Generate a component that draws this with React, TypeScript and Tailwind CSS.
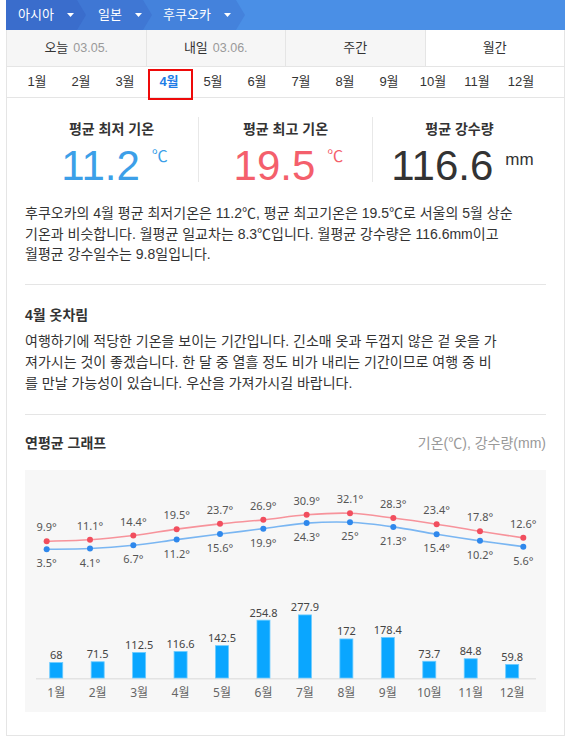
import React from 'react';

const crumbs = [
  { label: '아시아', cls: 'z-30 w-[80px] pl-[12px] bg-[#3a6dcc]' },
  { label: '일본', cls: 'z-20 w-[75px] pl-[21px] -ml-[9px] bg-[#3f77d4]' },
  { label: '후쿠오카', cls: 'z-10 w-[102px] pl-[20px] -ml-[9px] bg-[#4482dc]' },
];

const tabs = [
  { label: '오늘', date: '03.05.' },
  { label: '내일', date: '03.06.' },
  { label: '주간' },
  { label: '월간', active: true },
];

const months = ['1월', '2월', '3월', '4월', '5월', '6월', '7월', '8월', '9월', '10월', '11월', '12월'];

const maxTemps = [9.9, 11.1, 14.4, 19.5, 23.7, 26.9, 30.9, 32.1, 28.3, 23.4, 17.8, 12.6];
const minTemps = [3.5, 4.1, 6.7, 11.2, 15.6, 19.9, 24.3, 25, 21.3, 15.4, 10.2, 5.6];
const rain = [68, 71.5, 112.5, 116.6, 142.5, 254.8, 277.9, 172, 178.4, 73.7, 84.8, 59.8];

type Pt = [number, number];

// catmull-rom -> bezier, gives the soft curve of the reference
const smoothPath = (pts: Pt[]) => {
  let d = `M${pts[0][0]},${pts[0][1]}`;
  for (let i = 0; i < pts.length - 1; i++) {
    const p0 = pts[i - 1] || pts[i];
    const p1 = pts[i];
    const p2 = pts[i + 1];
    const p3 = pts[i + 2] || p2;
    const c1x = p1[0] + (p2[0] - p0[0]) / 6;
    const c1y = p1[1] + (p2[1] - p0[1]) / 6;
    const c2x = p2[0] - (p3[0] - p1[0]) / 6;
    const c2y = p2[1] - (p3[1] - p1[1]) / 6;
    d += ` C${c1x},${c1y} ${c2x},${c2y} ${p2[0]},${p2[1]}`;
  }
  return d;
};

const Caret = () => (
  <svg width="7" height="4" viewBox="0 0 7 4" className="shrink-0">
    <path d="M0 0h7L3.5 4z" fill="#fff" />
  </svg>
);

const YearChart: React.FC = () => {
  const tx = (i: number) => 21.67 + 43.33 * i;
  const ty = (t: number) => 83.7 - 1.259 * t;
  const maxPts: Pt[] = maxTemps.map((t, i) => [tx(i), ty(t)]);
  const minPts: Pt[] = minTemps.map((t, i) => [tx(i), ty(t)]);
  const bx = (i: number) => 10.5 + 41.45 * (i + 0.5);
  const base = 208;

  return (
    <svg width="520" height="242" viewBox="0 0 520 242" className="block">
      <path d={smoothPath(maxPts)} fill="none" stroke="#f7939b" strokeWidth="1.6" />
      <path d={smoothPath(minPts)} fill="none" stroke="#7ab6f2" strokeWidth="1.6" />
      {maxPts.map(([x, y], i) => (
        <g key={`mx${i}`}>
          <circle cx={x} cy={y} r="3" fill="#f14e5e" />
          <text
            x={x}
            y={y - 14.5}
            textAnchor="middle"
            dominantBaseline="central"
            fontSize="11"
            fill="#555"
            fontFamily="'Noto Sans', sans-serif"
          >
            {maxTemps[i]}°
          </text>
        </g>
      ))}
      {minPts.map(([x, y], i) => (
        <g key={`mn${i}`}>
          <circle cx={x} cy={y} r="3" fill="#2f88ec" />
          <text
            x={x}
            y={y + 13.5}
            textAnchor="middle"
            dominantBaseline="central"
            fontSize="11"
            fill="#555"
            fontFamily="'Noto Sans', sans-serif"
          >
            {minTemps[i]}°
          </text>
        </g>
      ))}
      <line x1="11" y1={base + 0.8} x2="511" y2={base + 0.8} stroke="#e3e3e3" strokeWidth="1.6" />
      {rain.map((v, i) => {
        const h = v * 0.227;
        const x = bx(i);
        return (
          <g key={`r${i}`}>
            <rect x={x - 6.5} y={base - h} width="13" height={h} fill="#0aa6ff" stroke="#6ccbff" strokeWidth="0.8" />
            <text
              x={x}
              y={base - h - 8}
              textAnchor="middle"
              dominantBaseline="central"
              fontSize="11"
              fill="#444"
              fontFamily="'Noto Sans', sans-serif"
            >
              {v}
            </text>
            <text
              x={x}
              y={222}
              textAnchor="middle"
              dominantBaseline="central"
              fontSize="12"
              fill="#666"
              fontFamily="'Noto Sans', 'Noto Sans CJK KR', sans-serif"
            >
              {months[i]}
            </text>
          </g>
        );
      })}
    </svg>
  );
};

const StatBox: React.FC<{ title: string; value: string; unit: string; color: string; first?: boolean; unitCls?: string }> = ({
  title,
  value,
  unit,
  color,
  first,
  unitCls,
}) => (
  <div className={`flex-1 flex flex-col items-center h-[65px] ${first ? '' : 'border-l border-[#e8e8e8]'}`}>
    <div className="mt-[2px] text-[14px] leading-[20px] font-bold text-[#333]">{title}</div>
    <div className="mt-[6px] flex items-start pl-[6px]">
      <span className={`text-[42px] leading-[42px] ${color}`}>{value}</span>
      <span className={`ml-[12px] ${unitCls ?? 'mt-[3px] text-[16px] leading-[18px]'} ${color}`}>{unit}</span>
    </div>
  </div>
);

const App: React.FC = () => {
  return (
    <div className="min-h-[746px] bg-white pt-0 font-['Liberation_Sans','Noto_Sans_CJK_KR',sans-serif] text-[#333]">
      <div className="ml-[6px] w-[559px]">
        {/* breadcrumb */}
        <div className="flex h-[30px] bg-[#4a8fe6]">
          {crumbs.map((c) => (
            <div
              key={c.label}
              className={`relative flex items-center gap-[13px] h-full text-[13px] text-white [clip-path:polygon(0_0,calc(100%-9px)_0,100%_50%,calc(100%-9px)_100%,0_100%)] ${c.cls}`}
            >
              <span>{c.label}</span>
              <Caret />
            </div>
          ))}
        </div>

        <div className="border-x border-b border-[#e5e5e5]">
          {/* tabs */}
          <div className="flex h-[37px] border-b border-[#e5e5e5]">
            {tabs.map((t, i) => (
              <div
                key={t.label}
                className={`flex-1 flex items-center justify-center gap-[5px] text-[13px] ${
                  t.active ? 'bg-white' : 'bg-[#f6f6f6]'
                } ${i > 0 ? 'border-l border-[#e5e5e5]' : ''}`}
              >
                <span className="text-[#333]">{t.label}</span>
                {t.date && <span className="text-[#9a9a9a] text-[12.5px]">{t.date}</span>}
              </div>
            ))}
          </div>

          {/* months */}
          <div className="flex h-[31px] pl-[8px] border-b border-[#e5e5e5]">
            {months.map((m) => {
              const active = m === '4월';
              return (
                <div
                  key={m}
                  className={`relative w-[44px] flex items-center justify-center text-[13px] ${
                    active ? 'font-bold text-[#1e7ce6]' : 'text-[#333]'
                  }`}
                >
                  {m}
                  {active && (
                    <span className="absolute left-[1px] top-[2px] w-[45px] h-[31px] border-2 border-[#ee0a0a]" />
                  )}
                </div>
              );
            })}
          </div>

          <div className="px-[18px] pb-[23px]">
            {/* stats */}
            <div className="flex mt-[19px]">
              <StatBox first title="평균 최저 기온" value="11.2" unit="℃" color="text-[#3c9fe8]" />
              <StatBox title="평균 최고 기온" value="19.5" unit="℃" color="text-[#f45f6c]" />
              <StatBox
                title="평균 강수량"
                value="116.6"
                unit="mm"
                color="text-[#333]"
                unitCls="mt-[6px] text-[17px] leading-[18px]"
              />
            </div>

            <p className="mt-[21px] text-[14px] leading-[20.5px] text-[#333]">
              <span className="block whitespace-nowrap">
                후쿠오카의 4월 평균 최저기온은 11.2℃, 평균 최고기온은 19.5℃로 서울의 5월 상순
              </span>
              <span className="block whitespace-nowrap">
                기온과 비슷합니다. 월평균 일교차는 8.3℃입니다. 월평균 강수량은 116.6mm이고
              </span>
              <span className="block whitespace-nowrap">월평균 강수일수는 9.8일입니다.</span>
            </p>

            <div className="mt-[19px] border-t border-[#e5e5e5]" />

            <h3 className="mt-[20px] text-[14px] leading-[20px] font-bold">4월 옷차림</h3>
            <p className="mt-[6.5px] text-[14px] leading-[21px] text-[#333]">
              <span className="block whitespace-nowrap">
                여행하기에 적당한 기온을 보이는 기간입니다. 긴소매 옷과 두껍지 않은 겉 옷을 가
              </span>
              <span className="block whitespace-nowrap">
                져가시는 것이 좋겠습니다. 한 달 중 열흘 정도 비가 내리는 기간이므로 여행 중 비
              </span>
              <span className="block whitespace-nowrap">를 만날 가능성이 있습니다. 우산을 가져가시길 바랍니다.</span>
            </p>

            <div className="mt-[19.5px] border-t border-[#e5e5e5]" />

            <div className="mt-[19px] flex items-center justify-between h-[20px]">
              <h3 className="text-[14px] font-bold">연평균 그래프</h3>
              <span className="text-[14px] text-[#999]">기온(℃), 강수량(mm)</span>
            </div>

            <div className="mt-[16px] bg-[#f7f7f7]">
              <YearChart />
            </div>
          </div>
        </div>
      </div>
    </div>
  );
};

export default App;
